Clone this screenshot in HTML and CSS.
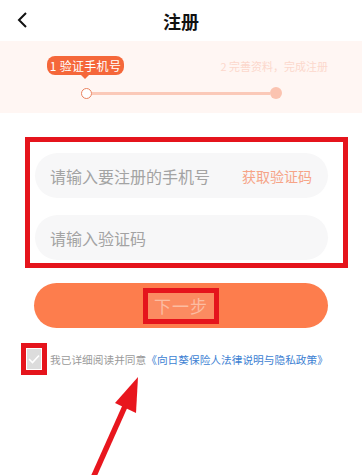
FILE: index.html
```html
<!DOCTYPE html>
<html lang="zh">
<head>
<meta charset="utf-8">
<link rel="stylesheet" href="styles.css">
</head>
<body>
<div class="page">
  <header class="topbar">
    <svg class="back" width="12" height="16" viewBox="0 0 12 16"><path d="M10 1 L3 8 L10 15" fill="none" stroke="#111" stroke-width="2"/></svg>
    <h1 class="title">注册</h1>
  </header>
  <section class="steps">
    <div class="step-labels">
      <div class="tip">1 验证手机号</div>
      <div class="step2">2 完善资料，完成注册</div>
    </div>
    <div class="track">
      <span class="dot-start"></span>
      <span class="line"></span>
      <span class="dot-end"></span>
    </div>
  </section>
  <section class="form">
    <div class="mark fields">
      <div class="field">
        <span class="ph">请输入要注册的手机号</span>
        <span class="code">获取验证码</span>
      </div>
      <div class="field">
        <span class="ph">请输入验证码</span>
      </div>
    </div>
    <div class="btn"><span class="btn-text">下一步</span></div>
    <div class="agree">
      <span class="check-mark"><span class="check"><svg width="12" height="10" viewBox="0 0 12 10"><path d="M1 5 L4.5 8.5 L11 1.5" fill="none" stroke="#fff" stroke-width="1.6"/></svg></span></span>
      <span class="agree-text">我已详细阅读并同意<span class="link">《向日葵保险人法律说明与隐私政策》</span></span>
    </div>
  </section>
  <svg class="arrow" width="362" height="475" viewBox="0 0 362 475">
    <path d="M93 478 L126 404" stroke="#e8161e" stroke-width="5.5" fill="none"/>
    <polygon points="138,377 115,403 136,413" fill="#e8161e"/>
  </svg>
</div>
</body>
</html>
```
FILE: styles.css
```css
* { box-sizing: border-box; margin: 0; padding: 0; }
html, body { background: #fff; }
body {
  width: 362px;
  height: 475px;
  overflow: hidden;
  font-family: "Noto Sans CJK SC", "Noto Sans", sans-serif;
}
.page { position: relative; width: 362px; height: 475px; }
.topbar {
  height: 41px;
  display: flex;
  align-items: center;
  justify-content: center;
  position: relative;
}
.back { position: absolute; left: 16px; top: 12px; }
.title {
  font-size: 18px;
  font-weight: 700;
  color: #111;
  line-height: 1;
}
.steps {
  height: 72px;
  background: #fff6f3;
  padding: 15px 34px 0 47px;
}
.step-labels {
  display: flex;
  justify-content: space-between;
  align-items: center;
  height: 19px;
}
.tip {
  position: relative;
  width: 77px;
  height: 19px;
  border-radius: 8px;
  background: #f5673a;
  color: #fff;
  font-size: 12px;
  line-height: 19px;
  text-align: center;
  letter-spacing: 0.3px;
}
.tip::after {
  content: "";
  position: absolute;
  left: 34px;
  bottom: -4px;
  border-left: 4px solid transparent;
  border-right: 4px solid transparent;
  border-top: 4px solid #f5673a;
}
.step2 {
  font-size: 11px;
  color: #fcd8cc;
  line-height: 19px;
  margin-top: 1px;
}
.track {
  display: flex;
  align-items: center;
  margin: 12px 46px 0 34px;
  height: 12px;
}
.dot-start {
  width: 11px;
  height: 11px;
  border-radius: 50%;
  background: #fff;
  border: 1.5px solid #e9825f;
  flex: none;
}
.line {
  flex: 1;
  height: 3px;
  background: #fbc9b8;
}
.dot-end {
  width: 12px;
  height: 12px;
  border-radius: 50%;
  background: #fbc3b0;
  flex: none;
}
.form {
  padding: 24px 14px 0 25px;
}
.mark { border: 5px solid #e5141c; }
.fields {
  width: 323px;
  padding: 11px 15px 3px 5px;
  display: flex;
  flex-direction: column;
  gap: 17px;
}
.field {
  height: 45px;
  border-radius: 23px;
  background: #f7f7f8;
  display: flex;
  align-items: center;
  justify-content: space-between;
  padding: 0 16px 0 15px;
}
.ph { font-size: 16px; color: #a3a3a3; }
.code { font-size: 14px; color: #f6a487; }
.btn {
  margin: 15px 0 0 9px;
  width: 294px;
  height: 45px;
  border-radius: 23px;
  background: #fd7d4d;
  display: flex;
  align-items: center;
  justify-content: center;
}
.btn-text {
  width: 76px;
  height: 36px;
  border: 5px solid #e5141c;
  background: #fb8b61;
  color: #fcbca1;
  font-size: 17px;
  line-height: 26px;
  text-align: center;
  letter-spacing: 1px;
}
.agree {
  margin: 15px 0 0 -4px;
  display: flex;
  align-items: center;
  gap: 3px;
}
.check-mark {
  width: 26px;
  height: 32px;
  border: 5px solid #e5141c;
  padding: 1px;
  display: flex;
  flex: none;
}
.check {
  flex: 1;
  background: #dcdcdc;
  display: flex;
  align-items: center;
  justify-content: center;
}
.agree-text {
  font-size: 10.7px;
  color: #9a9a9a;
  white-space: nowrap;
}
.link { color: #3d7fd3; }
.arrow {
  position: absolute;
  left: 0;
  top: 0;
  pointer-events: none;
}
```
